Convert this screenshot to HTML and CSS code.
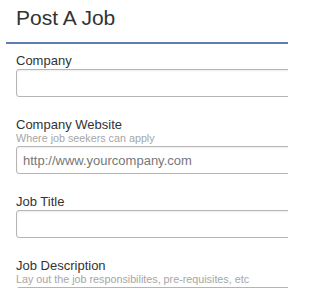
FILE: index.html
```html
<!DOCTYPE html>
<html>
<head>
<meta charset="utf-8">
<link rel="stylesheet" href="styles.css">
</head>
<body>
<div class="page">
  <h1 class="title">Post A Job</h1>
  <form class="form">
    <div class="field">
      <label class="label">Company</label>
      <input class="input" type="text">
    </div>
    <div class="field">
      <label class="label">Company Website</label>
      <div class="hint">Where job seekers can apply</div>
      <input class="input" type="text" placeholder="http://www.yourcompany.com">
    </div>
    <div class="field">
      <label class="label">Job Title</label>
      <input class="input" type="text">
    </div>
    <div class="field">
      <label class="label">Job Description</label>
      <div class="hint">Lay out the job responsibilites, pre-requisites, etc</div>
      <input class="input" type="text">
    </div>
  </form>
</div>
</body>
</html>
```
FILE: styles.css
```css
html, body {
  margin: 0;
  padding: 0;
  background: #ffffff;
  overflow: hidden;
}
body {
  width: 288px;
  height: 288px;
}
.page {
  width: 282px;
  height: 288px;
  overflow: hidden;
  margin-left: 6px;
  font-family: "Liberation Sans", Arial, sans-serif;
  color: #333333;
}
.title {
  margin: 0;
  padding: 5px 0 11px 10px;
  font-size: 21px;
  line-height: 26px;
  font-weight: normal;
  color: #333333;
  border-bottom: 2px solid #5b7db3;
}
.form {
  padding: 9px 0 0 10px;
}
.field {
  display: flex;
  flex-direction: column;
  margin-bottom: 20px;
}
.label {
  font-size: 13px;
  line-height: 15px;
  color: #333333;
}
.hint {
  font-size: 10.75px;
  line-height: 12px;
  color: #a6a6a6;
  margin-bottom: 1px;
}
.input {
  box-sizing: border-box;
  width: 300px;
  height: 28px;
  margin: 1px 0 0 0;
  border: 1px solid #b5b5b5;
  border-radius: 3px;
  padding: 0 6px;
  font-family: "Liberation Sans", Arial, sans-serif;
  font-size: 13px;
  color: #333;
  background: #fff;
  box-shadow: inset 0 1px 2px rgba(0,0,0,0.08);
}
.input::placeholder {
  color: #777777;
}
```
